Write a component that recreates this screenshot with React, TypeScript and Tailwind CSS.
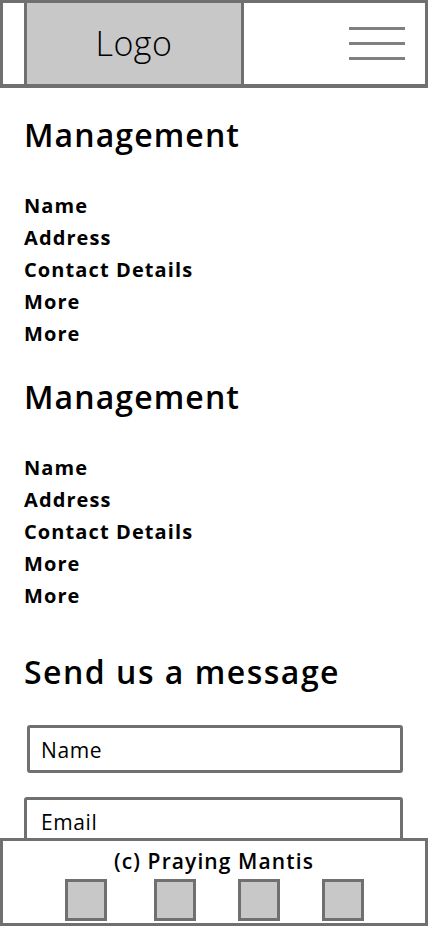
import React from "react";

const Section = () => (
  <section>
    <h2 className="text-[32px] leading-[40px] font-semibold tracking-[1.1px] text-black">Management</h2>
    <ul className="mt-[35px] text-[20px] leading-[32px] font-bold tracking-[1.1px] text-black">
      <li>Name</li>
      <li>Address</li>
      <li>Contact Details</li>
      <li>More</li>
      <li>More</li>
    </ul>
  </section>
);

export default function App() {
  return (
    <div className="min-h-[926px] w-[428px] bg-white" style={{ fontFamily: "'Open Sans', 'Noto Sans', sans-serif" }}>
      <header className="flex h-[88px] border-[3px] border-b-4 border-[#707070] bg-white">
        <div className="w-[21px] bg-white" />
        <div className="flex w-[220px] items-center justify-center border-x-[3px] border-[#707070] bg-[#c8c8c8]">
          <span className="text-[34px] leading-[40px] font-light tracking-[0.5px] text-black -mt-[2px]">Logo</span>
        </div>
        <div className="flex flex-1 items-center justify-end pr-[20px]">
          <div className="flex w-[56px] flex-col gap-[12px]">
            <span className="block h-[3px] bg-[#808080]" />
            <span className="block h-[3px] bg-[#808080]" />
            <span className="block h-[3px] bg-[#808080]" />
          </div>
        </div>
      </header>

      <main className="px-[24px] pt-[27px] pb-[120px]">
        <Section />
        <div className="mt-[27px]">
          <Section />
        </div>
        <h2 className="mt-[40px] text-[32px] leading-[40px] font-semibold tracking-[1.5px] text-black">Send us a message</h2>
        <div className="mt-[33px] ml-[3px] mr-[1px] flex h-[48px] items-center rounded-[3px] border-[3px] border-[#707070] px-[11px] pt-[3px] text-[21px] tracking-[0.6px] text-black">
          Name
        </div>
        <div className="mt-[24px] mr-[1px] flex h-[48px] items-center rounded-[3px] border-[3px] border-[#707070] px-[14px] pt-[3px] text-[21px] tracking-[0.6px] text-black">
          Email
        </div>
      </main>

      <footer className="fixed bottom-0 left-0 w-[428px] h-[88px] border-[3px] border-[#707070] bg-white">
        <p className="text-center text-[21px] leading-[28px] font-semibold tracking-[1.1px] text-black pt-[6px]">(c) Praying Mantis</p>
        <div className="mt-[4px] flex pl-[62px]">
          <div className="h-[42px] w-[42px] border-[3px] border-[#707070] bg-[#c8c8c8]" />
          <div className="ml-[47px] h-[42px] w-[42px] border-[3px] border-[#707070] bg-[#c8c8c8]" />
          <div className="ml-[42px] h-[42px] w-[42px] border-[3px] border-[#707070] bg-[#c8c8c8]" />
          <div className="ml-[42px] h-[42px] w-[42px] border-[3px] border-[#707070] bg-[#c8c8c8]" />
        </div>
      </footer>
    </div>
  );
}
